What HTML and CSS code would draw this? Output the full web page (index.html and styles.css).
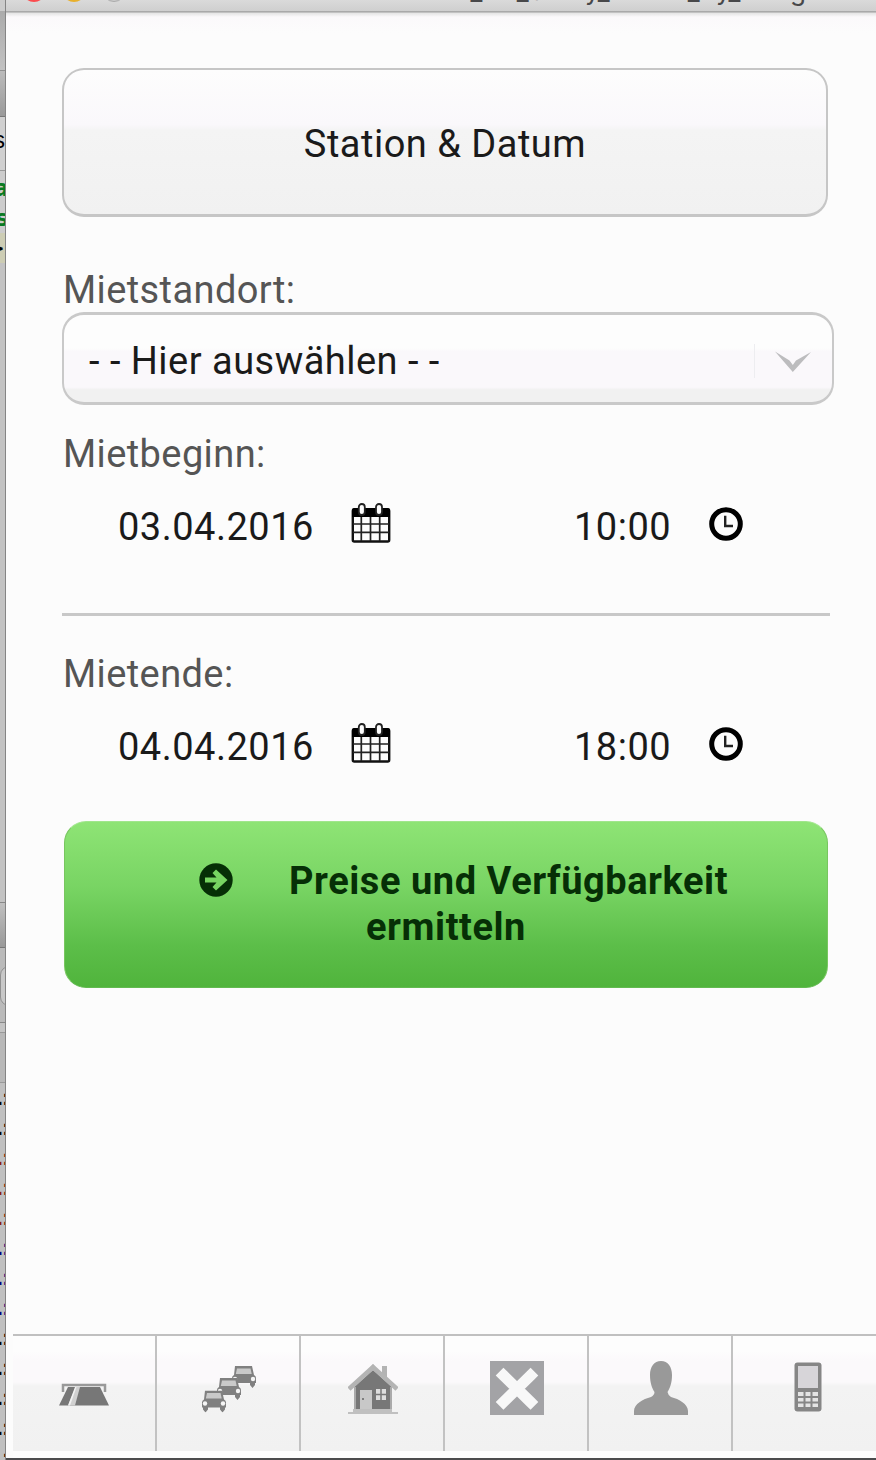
FILE: index.html
```html
<!DOCTYPE html>
<html lang="de">
<head>
<meta charset="utf-8">
<title>Station &amp; Datum</title>
<link rel="stylesheet" href="styles.css">
</head>
<body>
<svg class="defs" width="0" height="0">
  <symbol id="calendar" viewBox="0 0 40 40">
    <rect x="1.800" y="6.500" width="36.400" height="32" rx="1.500" fill="#fdfdfd" stroke="#111" stroke-width="2.400"/>
    <path d="M1 14V7q0-2 2-2h34q2 0 2 2v7z" fill="#000"/>
    <path d="M10.300 14v24M19.500 14v24M28.700 14v24M2 21h36M2 29.300h36" stroke="#222" stroke-width="1.700"/>
    <rect x="7.800" y="1" width="6" height="11" rx="3" fill="#fdfdfd" stroke="#222" stroke-width="1.800"/>
    <rect x="25" y="1" width="6" height="11" rx="3" fill="#fdfdfd" stroke="#222" stroke-width="1.800"/>
  </symbol>
  <symbol id="clock" viewBox="0 0 34 34">
    <circle cx="17" cy="17" r="14.300" fill="none" stroke="#000" stroke-width="5"/>
    <path d="M16.200 8.800V19H24" fill="none" stroke="#222" stroke-width="2.400"/>
  </symbol>
  <symbol id="car" viewBox="0 0 26 22">
    <path d="M4 0h17l2 9q2 1 2 3v5H1v-5q0-2 2-3z" fill="#808080"/>
    <path d="M6 2.500h13.500l1.200 5.500H4.800z" fill="#c9c9c9"/>
    <path d="M2 16h5v3l-2.500 3L2 19zM19 16h5v3l-2.500 3L19 19z" fill="#808080"/>
    <circle cx="4" cy="13" r="2.200" fill="#f5f5f5"/>
    <circle cx="22" cy="13" r="2.200" fill="#f5f5f5"/>
  </symbol>
</svg>
<div class="desktop">
  <aside class="behind">
    <div class="b b1"></div>
    <div class="b b2"></div>
    <div class="b b3"></div>
    <div class="b b4"><span>s</span></div>
    <div class="b b5"><span class="green">a</span><span class="green">s</span><span class="tag">&gt;</span></div>
    <div class="b b6"></div>
    <div class="b b7"></div>
    <div class="b b8"><i></i></div>
    <div class="b b9"></div>
    <div class="b b10"></div>
    <div class="b log"><span>.:</span><span>.:</span><span class="red">.:</span><span class="red">.:</span><span class="red">.:</span><span class="blue">.:</span><span class="blue">.:</span><span class="blue">.:</span><span>.:</span><span>.:</span><span>.:</span><span>.:</span><span>.:</span></div>
  </aside>
  <div class="window">
    <header class="titlebar">
      <svg class="lights" width="120" height="3" viewBox="0 0 120 3">
        <circle cx="28" cy="-10" r="12" fill="#fb4b4e"/>
        <circle cx="68" cy="-10" r="12" fill="#e8b02c"/>
        <circle cx="108" cy="-10" r="11.500" fill="#ccc" stroke="#aaa"/>
      </svg>
      <div class="title">5554:AVD_for_Study_Nexus_by_Google</div>
    </header>
    <main class="page">
      <h1 class="heading"><span>Station &amp; Datum</span></h1>
      <div class="label l1">Mietstandort:</div>
      <div class="select">
        <span class="choice">- - Hier auswählen - -</span>
        <span class="drop"><svg width="38" height="24" viewBox="0 0 38 24"><path d="M1 1.500L15.500 10.500L18.800 15L22 10.500L37 2L18.800 22z" fill="#bcbcbe"/></svg></span>
      </div>
      <div class="label l2">Mietbeginn:</div>
      <div class="row">
        <span class="date">03.04.2016</span><svg class="cal" width="40" height="40"><use href="#calendar"/></svg>
        <span class="time">10:00</span><svg class="clk" width="34" height="34"><use href="#clock"/></svg>
      </div>
      <div class="rule"></div>
      <div class="label l3">Mietende:</div>
      <div class="row">
        <span class="date">04.04.2016</span><svg class="cal" width="40" height="40"><use href="#calendar"/></svg>
        <span class="time">18:00</span><svg class="clk" width="34" height="34"><use href="#clock"/></svg>
      </div>
      <div class="submit">
        <div class="line1"><svg width="34" height="34" viewBox="0 0 34 34"><circle cx="17" cy="17" r="16.700" fill="#062f06"/><path d="M6 14.500H17.500L13.500 10L17 6.500L28.500 17L17 27.500L13.500 24L17.500 19.500H6z" fill="#77d461"/></svg><span class="s1">Preise und Verfügbarkeit</span></div>
        <div class="line2"><span class="s2">ermitteln</span></div>
      </div>
    </main>
    <nav class="tabs">
      <div class="tab t1"><svg width="52" height="24" viewBox="0 0 52 24"><path d="M5 9V2H47V9" fill="none" stroke="#999" stroke-width="2.500"/><path d="M10 4H42L51 22.500H1z" fill="#777"/><path d="M17.500 4H22L17 22.500H10z" fill="#d0d0d0"/><path d="M17 4H18.500L12 22.500H10z" fill="#f2f2f2"/></svg></div>
      <div class="tab t2"><svg width="56" height="48" viewBox="0 0 56 48"><use href="#car" x="30" y="1" width="26" height="22"/><use href="#car" x="15" y="13" width="26" height="22"/><use href="#car" x="0" y="25.500" width="26" height="22"/></svg></div>
      <div class="tab t3"><svg width="50" height="52" viewBox="0 0 50 52"><path d="M34 3h5v15l-5-5z" fill="#b3b3b3"/><path d="M6 24L25 7l19 17v22H6z" fill="#777"/><path d="M7 24v22M43 24v22" stroke="#aaa" stroke-width="2"/><path d="M1 26L25 4L49 26" fill="none" stroke="#b4b4b4" stroke-width="4.500"/><path d="M25 1l5 6v4l-5-4-5 4V7z" fill="#b4b4b4"/><rect x="12" y="27" width="12" height="20" fill="#c8c8c8"/><circle cx="15" cy="36" r="1" fill="#666"/><rect x="28" y="26" width="10" height="11" fill="#ddd"/><path d="M33 26v11M28 31.500h10" stroke="#777" stroke-width="1.500"/><path d="M5 46h39v3h6v2H0v-2h5z" fill="#c0c0c0"/></svg></div>
      <div class="tab t4"><svg width="54" height="54" viewBox="0 0 54 54"><rect width="54" height="54" fill="#a3a3a6"/><path d="M13.500 14.500L40.500 41M40.500 14.500L13.500 41" stroke="#f8f8f8" stroke-width="11" stroke-linecap="square"/></svg></div>
      <div class="tab t5"><svg width="54" height="54" viewBox="0 0 54 54"><path d="M27 0C34 0 38 6 38 14C38 22 36 27 33.500 31Q34 34 37 36C45 38 54 43 54 50V54H0V50C0 43 9 38 17 36Q20.500 34 20.500 31C18 27 16 22 16 14C16 6 20 0 27 0z" fill="#999"/></svg></div>
      <div class="tab t6"><svg width="28" height="50" viewBox="0 0 28 50"><rect x=".5" y=".5" width="27" height="49" rx="3" fill="#868686"/><rect x="4" y="4" width="20" height="22" fill="#d7d5d9"/><path d="M4 30h5.500v4H4zM11.500 30h5v4h-5zM18.500 30H24v4h-5.500zM4 36h5.500v3.500H4zM11.500 36h5v3.500h-5zM18.500 36H24v3.500h-5.500zM4 41.500h5.500V45H4zM11.500 41.500h5V45h-5zM18.500 41.500H24V45h-5.500z" fill="#e4e4e4"/></svg></div>
    </nav>
  </div>
</div>
</body>
</html>
```
FILE: styles.css
```css
* { box-sizing: border-box; }
body { margin: 0; font-family: Roboto, "Liberation Sans", sans-serif; font-size: 38px; color: #1a1a1a; background: #c0c0c0; }
.defs { position: absolute; }
.desktop { display: flex; width: 876px; height: 1460px; overflow: hidden; }

.behind { width: 6px; flex: none; height: 1460px; overflow: hidden; border-right: 1px solid #858585; background: #c0c0c0; font-family: "DejaVu Sans", sans-serif; font-size: 23px; color: #000; }
.b { overflow: hidden; display: flex; flex-direction: column; align-items: flex-end; }
.b span { display: block; line-height: 30px; height: 30px; flex: none; }
.b1 { height: 11px; background: #ccc; }
.b2 { height: 60px; background: linear-gradient(#ababab, #c2c2c2); border-bottom: 1px solid #909090; }
.b3 { height: 46px; background: linear-gradient(#bbb, #9a9a9a); border-bottom: 1px solid #777; }
.b4 { height: 54px; background: #d0d0d0; border-bottom: 1px solid #999; padding-top: 8px; font-family: "Liberation Sans", sans-serif; }
.b5 { height: 731px; padding-top: 2px; background: linear-gradient(#ccc 0 62px, #cdcdb4 62px 92px, #c3c3c3 92px); }
.green { color: #087a22; font-weight: bold; letter-spacing: -4px; }
.b6 { height: 46px; background: linear-gradient(#c0c0c0, #999); border-top: 1px solid #888; border-bottom: 1px solid #777; }
.b7 { height: 18px; background: #bababa; }
.b8 { height: 57px; background: #bababa; border-bottom: 1px solid #888; }
.b8 i { display: block; width: 30px; height: 40px; border: 1px solid #909090; border-radius: 9px; background: #c8c8c8; align-self: flex-start; }
.b9 { height: 10px; background: #c4c4c4; border-bottom: 1px solid #999; }
.b10 { height: 50px; background: #b8b8b8; border-bottom: 1px solid #999; }
.log { height: 377px; background: #c0c0c0; font-family: "DejaVu Sans Mono", monospace; font-size: 21px; }
.log span { letter-spacing: -7px; }
.red { color: #8b1c0c; }
.blue { color: #000080; }

.window { width: 870px; height: 1460px; flex: none; display: flex; flex-direction: column; background: #fcfcfc; border-bottom: 2px solid #4b4b4d; }
.titlebar { height: 13px; flex: none; display: flex; align-items: flex-start; overflow: hidden; background: linear-gradient(#dadada, #cfcfcf 11px, #a9a9a9 11px 12px, #c2c2c2 12px); }
.lights { flex: none; }
.title { margin: -28px 0 0 221px; height: 38px; line-height: 38px; white-space: nowrap; font-family: Inter, sans-serif; font-size: 26px; color: #48484a; }

.page { flex: 1; padding: 55px 0 0 56px; background: linear-gradient(#e4e4e4, #fbf9fb 4px, #fcfcfc 20px); }
.heading { margin: 0; width: 766px; height: 149px; border: 2px solid #c6c6c6; border-bottom-width: 3px; border-radius: 22px; background: linear-gradient(#fdfdfd, #faf8fb 38%, #f4f4f4 42%, #f1f1f1); font-weight: 400; font-size: 38px; letter-spacing: .5px; line-height: 148px; text-align: center; }
.label { height: 44px; line-height: 44px; padding-left: 1px; color: #555; letter-spacing: .4px; white-space: nowrap; }
.l1 { margin-top: 51px; }
.select { width: 772px; height: 93px; border: 3px solid #c9c9c9; border-left-width: 2px; border-right-width: 2px; border-radius: 22px; background: linear-gradient(#fdfdfd 0 38%, #faf8fb 42% 83%, #f1f1f1 86%); display: flex; align-items: center; justify-content: space-between; padding: 5px 20px 0 25px; letter-spacing: .48px; }
.drop { width: 58px; height: 34px; border-left: 1px solid #ededf0; padding-top: 6px; display: flex; justify-content: flex-end; }
.l2 { margin-top: 27px; }
.row { height: 48px; display: flex; align-items: flex-start; margin-top: 27px; padding-left: 56px; line-height: 48px; letter-spacing: .5px; white-space: nowrap; }
.date { width: 233px; }
.time { width: 135px; margin-left: 183px; }
.clk { margin-top: 4px; }
.rule { width: 768px; height: 3px; background: #c8c8c8; margin-top: 62px; }
.l3 { margin-top: 36px; }
.submit { margin: 50px 0 0 2px; width: 764px; height: 167px; padding-top: 36px; border-radius: 22px; border: 1px solid #78c660; border-top-color: #a0e68c; border-bottom-color: #62ba50; background: linear-gradient(#8ee475, #78d463 40%, #5cbe49 75%, #50b43c); color: #062f06; font-weight: 700; line-height: 46px; white-space: nowrap; font-size: 38px; letter-spacing: .55px; }
.line1 { height: 46px; display: flex; padding-left: 134px; }
.line1 svg { margin-top: 5px; margin-right: 56px; flex: none; }
.line2 { height: 46px; text-align: center; }

.tabs { height: 124px; flex: none; margin-left: 7px; border-top: 2px solid #c0c0c0; padding-bottom: 7px; display: flex; background: #fdfdfd; }
.tab { width: 144px; flex: none; border-right: 2px solid #c2c2c2; display: flex; justify-content: center; align-items: flex-start; background: linear-gradient(#fdfdfd 0 15px, #fbf9fb 25px 46px, #f3f3f3 50px, #f1f1f1); }
.t1 { padding-top: 47px; }
.t2 { padding-top: 29px; padding-left: 2px; }
.t3 { padding-top: 27px; padding-left: 2px; }
.t4, .t5 { padding-top: 25px; padding-left: 2px; }
.t6 { padding-top: 26px; padding-left: 5px; border-right: 0; }
```
